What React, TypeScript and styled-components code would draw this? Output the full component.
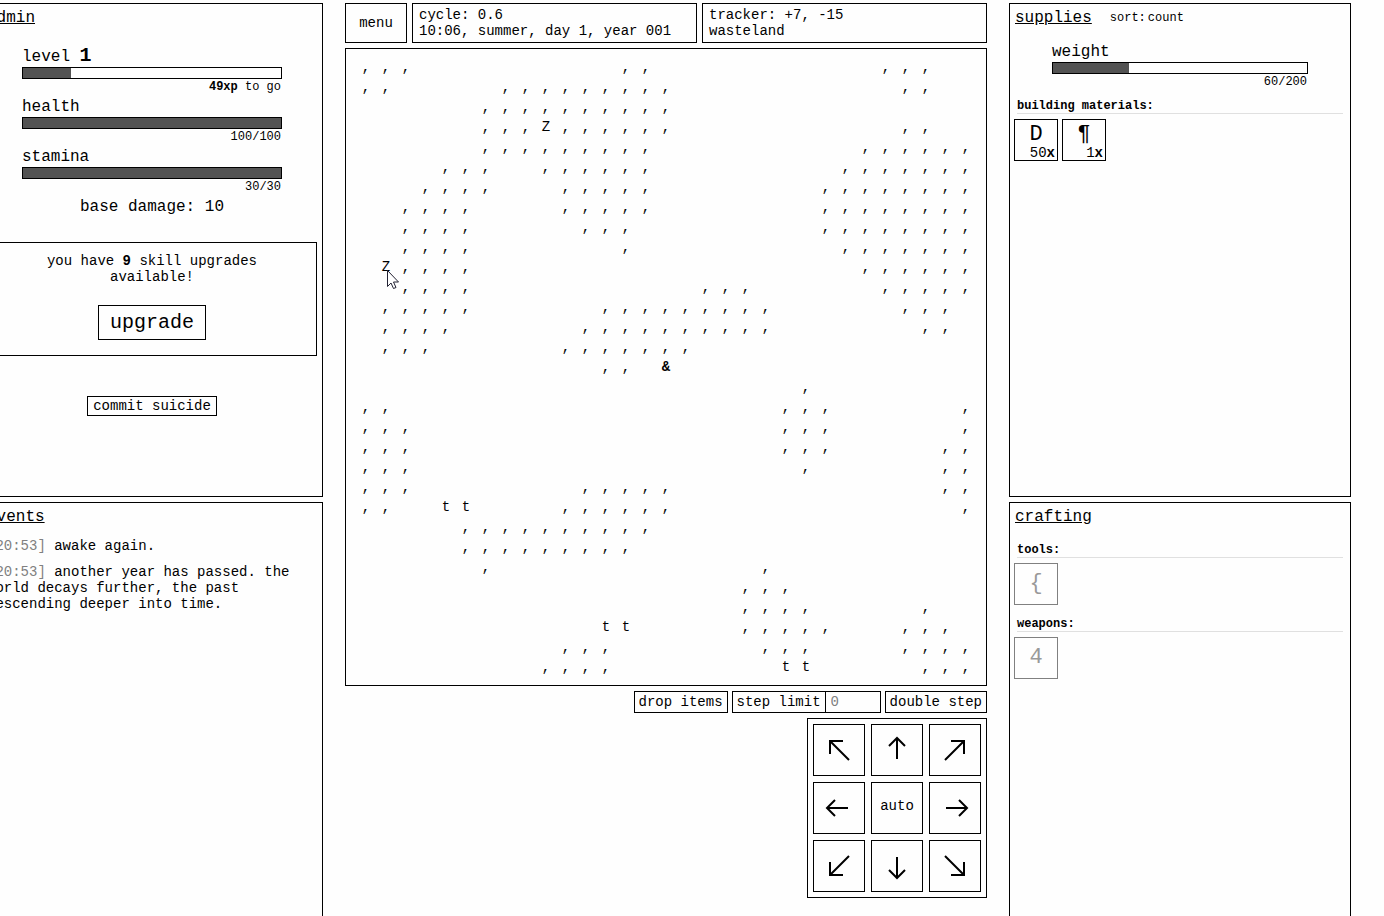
import React from "react";
import styled, { createGlobalStyle } from "styled-components";

const ink = "#000";
const paper = "#fefefe";
const faded = "#808080";

const GlobalStyle = createGlobalStyle`
  *, *::before, *::after { box-sizing: border-box; }
  body { margin: 0; background: ${paper}; overflow: hidden; }
  body, button, input {
    font-family: "Courier New", "Liberation Mono", monospace;
    font-size: 14px;
    line-height: 16px;
    color: ${ink};
  }
  h2, h3, p { margin: 0; font-weight: normal; }
  button, input { margin: 0; border-radius: 0; }
`;

const Page = styled.div`
  height: 100vh;
  overflow: hidden;
`;

const Columns = styled.div`
  display: grid;
  grid-template-columns: minmax(0, 1fr) auto minmax(0, 1fr);
  column-gap: 22px;
  margin: 0 33px 0 -19px;
  padding-top: 3px;
`;

const Side = styled.section`
  display: grid;
  grid-template-rows: repeat(2, 494px);
  row-gap: 5px;
`;

const Panel = styled.section`
  border: 1px solid ${ink};
  padding: 4px 5px;
`;

const PanelHead = styled.header<{ $gap: number }>`
  display: flex;
  align-items: center;
  margin-bottom: ${(p) => p.$gap}px;
`;

const Title = styled.h2`
  font-size: 16px;
  line-height: 20px;
  text-decoration: underline;
`;

const SortLabel = styled.span`
  margin-left: 18px;
  font-size: 12px;
`;

const SortButton = styled.button`
  border: 0;
  padding: 0 2px;
  background: none;
  font-size: 12px;
`;

const StatBlock = styled.div`
  margin: 0 35px 2px;
`;

const WeightBlock = styled.div`
  margin: 0 37px 9px;
`;

const StatLabel = styled.div`
  height: 20px;
  font-size: 16px;
  line-height: 20px;
`;

const Level = styled.b`
  font-size: 20px;
  line-height: 16px;
`;

const Track = styled.div`
  height: 12px;
  border: 1px solid ${ink};
`;

const Fill = styled.div`
  height: 100%;
  background: #535353;
`;

const StatValue = styled.div`
  padding-right: 1px;
  font-size: 12px;
  text-align: right;
`;

const Damage = styled.p`
  font-size: 16px;
  line-height: 20px;
  text-align: center;
`;

const Notice = styled.div`
  display: flex;
  flex-direction: column;
  align-items: center;
  gap: 20px;
  margin: 25px 0 40px;
  border: 1px solid ${ink};
  padding: 10px 30px 15px;
  text-align: center;
`;

const Button = styled.button`
  border: 1px solid ${ink};
  padding: 1px 4px;
  background: ${paper};
  white-space: nowrap;
`;

const UpgradeButton = styled(Button)`
  height: 35px;
  padding: 0 11px;
  font-size: 20px;
`;

const EndButton = styled(Button)`
  display: block;
  height: 20px;
  margin: 0 auto;
  padding: 0 5px;
`;

const Log = styled.div`
  display: grid;
  gap: 10px;
`;

const Stamp = styled.span`
  color: ${faded};
`;

const Group = styled.section`
  & + & { margin-top: 12px; }
`;

const GroupName = styled.h3`
  margin: 0 2px 5px;
  border-bottom: 1px solid #e0e0e0;
  font-size: 12px;
  font-weight: bold;
  line-height: 14px;
`;

const Items = styled.div`
  display: flex;
  gap: 4px;
  margin-left: -1px;
`;

const Item = styled.button<{ $locked?: boolean }>`
  display: grid;
  grid-template-rows: 27px 13px;
  align-items: start;
  width: 44px;
  height: 42px;
  border: 1px solid ${(p) => (p.$locked ? faded : ink)};
  padding: 0 2px;
  background: ${paper};
  color: ${(p) => (p.$locked ? "#999" : ink)};
`;

const Glyph = styled.span<{ $tall?: boolean }>`
  grid-row: ${(p) => (p.$tall ? "1 / 3" : "1")};
  font-size: 22px;
  line-height: ${(p) => (p.$tall ? 40 : 30)}px;
  text-align: center;
`;

const Count = styled.span`
  line-height: 12px;
  text-align: right;
`;

const Center = styled.main`
  display: flex;
  flex-direction: column;
  gap: 5px;
`;

const TopBar = styled.div`
  display: grid;
  grid-template-columns: 62px 1fr 1fr;
  gap: 5px;
  height: 40px;
`;

const Info = styled.div`
  border: 1px solid ${ink};
  padding: 3px 6px;
`;

const World = styled.div`
  position: relative;
  border: 1px solid ${ink};
  padding: 8px 10px;
`;

const Grid = styled.div`
  display: grid;
  grid-template-columns: repeat(31, 20px);
  grid-auto-rows: 20px;
`;

const Cell = styled.span<{ $player: boolean }>`
  font-weight: ${(p) => (p.$player ? "bold" : "normal")};
  line-height: 20px;
  text-align: center;
`;

const Cursor = styled.svg`
  position: absolute;
  left: 40px;
  top: 220px;
`;

const Actions = styled.div`
  display: flex;
  justify-content: flex-end;
  gap: 4px;
  height: 22px;
`;

const StepLimit = styled.div`
  display: flex;
  border: 1px solid ${ink};
  line-height: 20px;
`;

const StepLabel = styled.label`
  padding: 0 4px;
  border-right: 1px solid ${ink};
`;

const StepInput = styled.input`
  width: 54px;
  border: 0;
  padding: 0 5px;
  background: none;
  &::placeholder { color: ${faded}; opacity: 1; }
`;

const Pad = styled.div`
  display: grid;
  grid-template-columns: repeat(3, 52px);
  grid-auto-rows: 52px;
  gap: 6px;
  align-self: flex-end;
  border: 1px solid ${ink};
  padding: 5px;
`;

const PadButton = styled(Button)`
  padding: 0;
  svg { display: block; }
`;

const AutoButton = styled(PadButton)`
  padding-bottom: 4px;
`;

const terrain = [
  ",,,          ,,           ,,,  ",
  ",,     ,,,,,,,,,           ,,  ",
  "      ,,,,,,,,,,               ",
  "      ,,,Z,,,,,,           ,,  ",
  "      ,,,,,,,,,          ,,,,,,",
  "    ,,,  ,,,,,,         ,,,,,,,",
  "   ,,,,   ,,,,,        ,,,,,,,,",
  "  ,,,,    ,,,,,        ,,,,,,,,",
  "  ,,,,     ,,,         ,,,,,,,,",
  "  ,,,,       ,          ,,,,,,,",
  " Z,,,,                   ,,,,,,",
  "  ,,,,           ,,,      ,,,,,",
  " ,,,,,      ,,,,,,,,,      ,,, ",
  " ,,,,      ,,,,,,,,,,       ,, ",
  " ,,,      ,,,,,,,              ",
  "            ,, &               ",
  "                      ,        ",
  ",,                   ,,,      ,",
  ",,,                  ,,,      ,",
  ",,,                  ,,,     ,,",
  ",,,                   ,      ,,",
  ",,,        ,,,,,             ,,",
  ",,  tt    ,,,,,,              ,",
  "     ,,,,,,,,,,                ",
  "     ,,,,,,,,,                 ",
  "      ,             ,          ",
  "                   ,,,         ",
  "                   ,,,,     ,  ",
  "            tt     ,,,,,   ,,, ",
  "          ,,,       ,,,    ,,,,",
  "         ,,,,        tt     ,,,",
];

const straight = "M25 34V13M17 21L25 13L33 21";
const diagonal = "M35 35L16 16M16 29V16H29";

const directions = [
  { name: "north west", path: diagonal, turn: 0 },
  { name: "north", path: straight, turn: 0 },
  { name: "north east", path: diagonal, turn: 90 },
  { name: "west", path: straight, turn: 270 },
  null,
  { name: "east", path: straight, turn: 90 },
  { name: "south west", path: diagonal, turn: 270 },
  { name: "south", path: straight, turn: 180 },
  { name: "south east", path: diagonal, turn: 180 },
];

function Bar({ share }: { share: number }) {
  return (
    <Track>
      <Fill style={{ width: `${share}%` }} />
    </Track>
  );
}

function AdminPanel() {
  return (
    <Panel>
      <PanelHead $gap={19}>
        <Title>admin</Title>
      </PanelHead>
      <StatBlock>
        <StatLabel>level <Level>1</Level></StatLabel>
        <Bar share={18.6} />
        <StatValue><b>49xp</b> to go</StatValue>
      </StatBlock>
      <StatBlock>
        <StatLabel>health</StatLabel>
        <Bar share={100} />
        <StatValue>100/100</StatValue>
      </StatBlock>
      <StatBlock>
        <StatLabel>stamina</StatLabel>
        <Bar share={100} />
        <StatValue>30/30</StatValue>
      </StatBlock>
      <Damage>base damage: 10</Damage>
      <Notice>
        <p>you have <b>9</b> skill upgrades available!</p>
        <UpgradeButton type="button">upgrade</UpgradeButton>
      </Notice>
      <EndButton type="button">commit suicide</EndButton>
    </Panel>
  );
}

function EventsPanel() {
  return (
    <Panel>
      <PanelHead $gap={11}>
        <Title>events</Title>
      </PanelHead>
      <Log>
        <p><Stamp>[20:53]</Stamp> awake again.</p>
        <p>
          <Stamp>[20:53]</Stamp> another year has passed. the world decays
          further, the past descending deeper into time.
        </p>
      </Log>
    </Panel>
  );
}

function SuppliesPanel() {
  return (
    <Panel>
      <PanelHead $gap={14}>
        <Title>supplies</Title>
        <SortLabel>sort:</SortLabel>
        <SortButton type="button">count</SortButton>
      </PanelHead>
      <WeightBlock>
        <StatLabel>weight</StatLabel>
        <Bar share={30} />
        <StatValue>60/200</StatValue>
      </WeightBlock>
      <Group>
        <GroupName>building materials:</GroupName>
        <Items>
          <Item type="button">
            <Glyph>D</Glyph>
            <Count>50<b>x</b></Count>
          </Item>
          <Item type="button">
            <Glyph>¶</Glyph>
            <Count>1<b>x</b></Count>
          </Item>
        </Items>
      </Group>
    </Panel>
  );
}

function CraftingPanel() {
  return (
    <Panel>
      <PanelHead $gap={16}>
        <Title>crafting</Title>
      </PanelHead>
      <Group>
        <GroupName>tools:</GroupName>
        <Items>
          <Item type="button" $locked><Glyph $tall>{"{"}</Glyph></Item>
        </Items>
      </Group>
      <Group>
        <GroupName>weapons:</GroupName>
        <Items>
          <Item type="button" $locked><Glyph $tall>4</Glyph></Item>
        </Items>
      </Group>
    </Panel>
  );
}

function WorldMap() {
  return (
    <World>
      <Grid>
        {terrain.flatMap((row, y) =>
          Array.from(row).map((tile, x) => (
            <Cell key={`${x}-${y}`} $player={tile === "&"}>{tile}</Cell>
          ))
        )}
      </Grid>
      <Cursor width="14" height="21" viewBox="0 0 14 21" aria-hidden="true">
        <path
          d="M1.5 1.5V17.5L5 14L7.5 19.5L10 18.5L7.5 13H12.5Z"
          fill="#fff"
          stroke="#223"
          strokeWidth="1"
        />
      </Cursor>
    </World>
  );
}

function DirectionPad() {
  return (
    <Pad>
      {directions.map((d) =>
        d ? (
          <PadButton type="button" key={d.name} aria-label={d.name}>
            <svg width="50" height="50" viewBox="0 0 50 50" fill="none" stroke={ink} strokeWidth="2">
              <path d={d.path} transform={`rotate(${d.turn} 25 25)`} />
            </svg>
          </PadButton>
        ) : (
          <AutoButton type="button" key="auto">auto</AutoButton>
        )
      )}
    </Pad>
  );
}

export default function App() {
  return (
    <Page>
      <GlobalStyle />
      <Columns>
        <Side>
          <AdminPanel />
          <EventsPanel />
        </Side>
        <Center>
          <TopBar>
            <Button type="button">menu</Button>
            <Info>
              <p>cycle: 0.6</p>
              <p>10:06, summer, day 1, year 001</p>
            </Info>
            <Info>
              <p>tracker: +7, -15</p>
              <p>wasteland</p>
            </Info>
          </TopBar>
          <WorldMap />
          <Actions>
            <Button type="button">drop items</Button>
            <StepLimit>
              <StepLabel htmlFor="step-limit">step limit</StepLabel>
              <StepInput id="step-limit" placeholder="0" />
            </StepLimit>
            <Button type="button">double step</Button>
          </Actions>
          <DirectionPad />
        </Center>
        <Side>
          <SuppliesPanel />
          <CraftingPanel />
        </Side>
      </Columns>
    </Page>
  );
}
